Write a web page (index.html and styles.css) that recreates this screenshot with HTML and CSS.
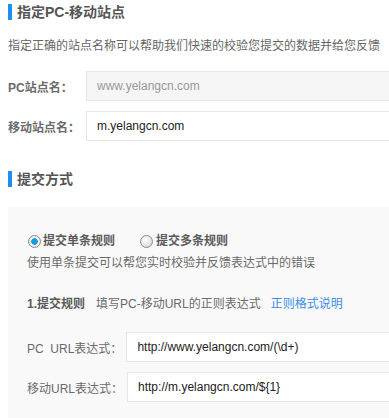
FILE: index.html
```html
<!DOCTYPE html>
<html lang="zh-CN">
<head>
<meta charset="utf-8">
<title>站点适配</title>
<link rel="stylesheet" href="styles.css">
</head>
<body>
<div class="page">
  <h2 class="section-title">指定PC-移动站点</h2>
  <p class="desc">指定正确的站点名称可以帮助我们快速的校验您提交的数据并给您反馈</p>
  <div class="site-form">
    <div class="row">
      <label class="label">PC站点名<span class="colon">：</span></label>
      <input class="field field-disabled" type="text" value="www.yelangcn.com" readonly>
    </div>
    <div class="row">
      <label class="label">移动站点名<span class="colon">：</span></label>
      <input class="field" type="text" value="m.yelangcn.com">
    </div>
  </div>

  <h2 class="section-title section-title-2">提交方式</h2>
  <div class="panel">
    <div class="radios">
      <label class="radio-item"><input class="radio" type="radio" name="mode" checked><span>提交单条规则</span></label>
      <label class="radio-item radio-item-2"><input class="radio" type="radio" name="mode"><span>提交多条规则</span></label>
    </div>
    <p class="panel-desc">使用单条提交可以帮您实时校验并反馈表达式中的错误</p>
    <div class="rule-head">
      <span class="rule-title">1.提交规则</span>
      <span class="rule-tip">填写PC-移动URL的正则表达式</span>
      <a class="rule-link" href="#">正则格式说明</a>
    </div>
    <div class="url-rows">
      <div class="url-row">
        <label class="url-label">PC&nbsp;&nbsp;URL表达式<span class="colon">：</span></label>
        <input class="field url-field" type="text" value="http://www.yelangcn.com/(\d+)">
      </div>
      <div class="url-row">
        <label class="url-label">移动URL表达式<span class="colon">：</span></label>
        <input class="field url-field" type="text" value="http://m.yelangcn.com/${1}">
      </div>
    </div>
  </div>
</div>
</body>
</html>
```
FILE: styles.css
```css
html, body {
  margin: 0;
  padding: 0;
  overflow: hidden;
  background: #fff;
}
body {
  font-family: "Liberation Sans", "Noto Sans CJK SC", sans-serif;
  font-size: 12px;
  color: #666;
}
.page {
  padding: 4px 0 0 8px;
  width: 700px;
}
.section-title {
  margin: 0;
  height: 16px;
  line-height: 16px;
  border-left: 4px solid #1e8ef0;
  padding-left: 5px;
  font-size: 14px;
  font-weight: bold;
  color: #555;
}
.section-title-2 {
  margin-top: 30px;
}
.desc {
  margin: 16px 0 0;
  line-height: 20px;
  color: #666;
}
.site-form {
  margin-top: 15px;
  display: flex;
  flex-direction: column;
  gap: 10px;
}
.row {
  display: flex;
  align-items: center;
}
.label {
  width: 78px;
  font-weight: bold;
  color: #6a6a6a;
}
.colon {
  font-family: "Noto Sans CJK TC", "Noto Sans CJK SC", sans-serif;
}
.field {
  box-sizing: border-box;
  height: 30px;
  width: 420px;
  margin: 0;
  padding: 0 10px;
  border: 1px solid #e6e6e6;
  background: #fff;
  font-family: "Liberation Sans", "Noto Sans CJK SC", sans-serif;
  font-size: 12px;
  color: #222;
  outline: none;
}
.field-disabled {
  background: #f5f5f5;
  color: #999;
}
.panel {
  margin-top: 20px;
  background: #f9f9f9;
  padding: 24px 0 20px 19px;
}
.radios {
  display: flex;
  align-items: center;
  line-height: 20px;
  height: 20px;
}
.radio-item {
  display: flex;
  align-items: center;
  gap: 2px;
  font-weight: bold;
  color: #5a5a5a;
}
.radio-item-2 {
  margin-left: 24px;
  gap: 3px;
}
.radio {
  appearance: none;
  -webkit-appearance: none;
  box-sizing: border-box;
  width: 13px;
  height: 13px;
  margin: 0 0 0 1px;
  border-radius: 50%;
  border: 1px solid #8a8a8a;
  background: radial-gradient(circle at 40% 35%, #ffffff 0%, #e6e6e6 55%, #c9c9c9 100%);
}
.radio:checked {
  background: radial-gradient(circle, #1a9ae0 0, #1a9ae0 3px, #f2f2f2 3.6px, #e2e2e2 100%);
}
.panel-desc {
  margin: 2px 0 0;
  line-height: 20px;
  color: #6a6a6a;
}
.rule-head {
  margin-top: 21px;
  line-height: 20px;
  display: flex;
  align-items: center;
}
.rule-title {
  font-weight: bold;
  color: #5a5a5a;
}
.rule-tip {
  margin-left: 11px;
  color: #6a6a6a;
}
.rule-link {
  margin-left: 10px;
  color: #3a8ee6;
  text-decoration: none;
}
.url-rows {
  margin-top: 18px;
  display: flex;
  flex-direction: column;
  gap: 10px;
}
.url-row {
  display: flex;
  align-items: center;
}
.url-label {
  margin-right: 4px;
  color: #6a6a6a;
  white-space: nowrap;
}
.url-field {
  padding-left: 10px;
}
```
